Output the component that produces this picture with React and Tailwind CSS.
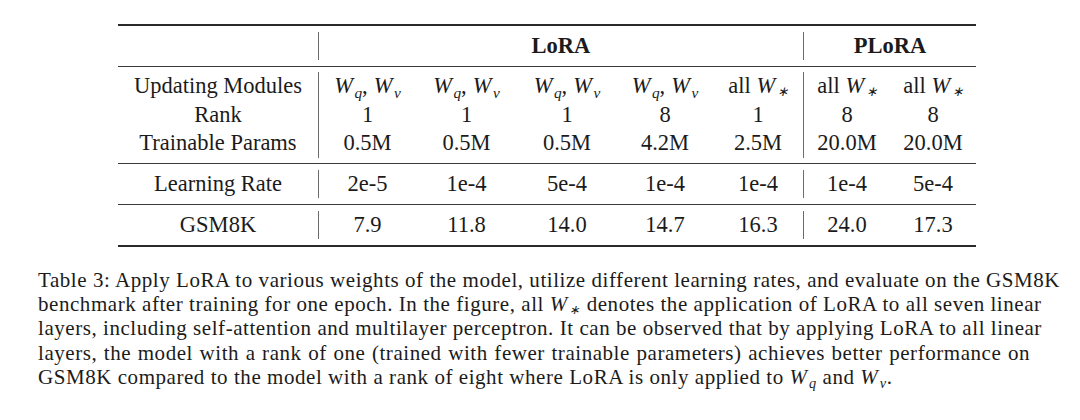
const serif = "font-['Liberation_Serif','Times_New_Roman',serif]";

const W = ({ sub }) => (
  <span className="italic">
    W
    <span className={`leading-[0] ml-[1.5px] ${sub === "∗" ? "text-[0.6em] align-[-0.2em]" : "text-[0.68em] align-[-0.3em]"}`}>
      {sub}
    </span>
  </span>
);

const WqWv = () => (
  <span>
    <W sub="q" />,<span className="ml-[6px]" />
    <W sub="v" />
  </span>
);

const AllW = () => (
  <span>
    all <W sub="∗" />
  </span>
);

const cols = "grid grid-cols-[200px_98px_101px_100px_96px_90px_87px_86px]";

const lora = [
  { mod: <WqWv />, rank: "1", params: "0.5M", lr: "2e-5", gsm: "7.9" },
  { mod: <WqWv />, rank: "1", params: "0.5M", lr: "1e-4", gsm: "11.8" },
  { mod: <WqWv />, rank: "1", params: "0.5M", lr: "5e-4", gsm: "14.0" },
  { mod: <WqWv />, rank: "8", params: "4.2M", lr: "1e-4", gsm: "14.7" },
  { mod: <AllW />, rank: "1", params: "2.5M", lr: "1e-4", gsm: "16.3" },
  { mod: <AllW />, rank: "8", params: "20.0M", lr: "1e-4", gsm: "24.0" },
  { mod: <AllW />, rank: "8", params: "20.0M", lr: "5e-4", gsm: "17.3" },
];

const vline = (i) => (i === 0 || i === 5 ? "border-l border-[#6b6b6b]" : "");

const SimpleRow = ({ label, field }) => (
  <div className={`${cols} py-[6px]`}>
    <div className="h-[28px] flex items-center justify-center">{label}</div>
    {lora.map((c, i) => (
      <div key={i} className={`h-[28px] flex items-center justify-center ${vline(i)}`}>
        {c[field]}
      </div>
    ))}
  </div>
);

const captionLines = [
  "Table 3: Apply LoRA to various weights of the model, utilize different learning rates, and evaluate on the GSM8K",
  <>benchmark after training for one epoch. In the figure, all <W sub="∗" /> denotes the application of LoRA to all seven linear</>,
  "layers, including self-attention and multilayer perceptron. It can be observed that by applying LoRA to all linear",
  "layers, the model with a rank of one (trained with fewer trainable parameters) achieves better performance on",
];

export default function App() {
  return (
    <div className={`w-[1080px] h-[420px] bg-white text-[#1b1b1b] ${serif} pt-[24px] overflow-hidden`}>
      <div className="ml-[118px] w-[858px] text-[22.5px] leading-none">
        <div className="border-t-2 border-[#2a2a2a]" />
        {/* header */}
        <div className={`${cols} py-[6px]`}>
          <div />
          <div className="col-span-5 border-l border-[#6b6b6b] h-[28px] flex items-center justify-center font-bold">
            LoRA
          </div>
          <div className="col-span-2 border-l border-[#6b6b6b] h-[28px] flex items-center justify-center font-bold">
            PLoRA
          </div>
        </div>
        <div className="border-t border-[#3a3a3a]" />
        {/* modules / rank / params */}
        <div className={`${cols} py-[5px]`}>
          <div className="flex flex-col items-center">
            <span className="h-[28.7px] flex items-center">Updating Modules</span>
            <span className="h-[28.7px] flex items-center">Rank</span>
            <span className="h-[28.7px] flex items-center">Trainable Params</span>
          </div>
          {lora.map((c, i) => (
            <div key={i} className={`flex flex-col items-center ${vline(i)}`}>
              <span className="h-[28.7px] flex items-center">{c.mod}</span>
              <span className="h-[28.7px] flex items-center">{c.rank}</span>
              <span className="h-[28.7px] flex items-center">{c.params}</span>
            </div>
          ))}
        </div>
        <div className="border-t border-[#3a3a3a]" />
        <SimpleRow label="Learning Rate" field="lr" />
        <div className="border-t border-[#3a3a3a]" />
        <SimpleRow label="GSM8K" field="gsm" />
        <div className="border-t-2 border-[#2a2a2a]" />
      </div>

      <div className="ml-[38px] w-[992px] mt-[21px] text-[21px] tracking-[0.55px] leading-[24.2px]">
        {captionLines.map((l, i) => (
          <div key={i} className="text-justify [text-align-last:justify] whitespace-nowrap">
            {l}
          </div>
        ))}
        <div>
          GSM8K compared to the model with a rank of eight where LoRA is only applied to <W sub="q" /> and{" "}
          <W sub="v" />.
        </div>
      </div>
    </div>
  );
}
